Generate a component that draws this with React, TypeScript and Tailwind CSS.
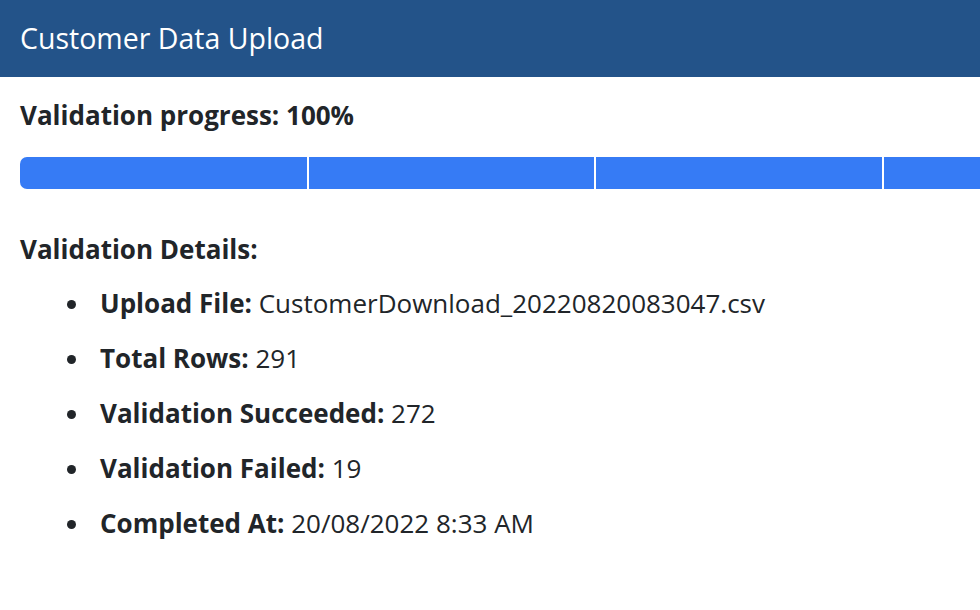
import React from "react"

const items = [
  { label: "Upload File:", value: "CustomerDownload_20220820083047.csv" },
  { label: "Total Rows:", value: "291" },
  { label: "Validation Succeeded:", value: "272" },
  { label: "Validation Failed:", value: "19" },
  { label: "Completed At:", value: "20/08/2022 8:33 AM" },
]

export default function App() {
  return (
    <div
      className="h-[610px] w-[980px] overflow-hidden bg-white text-[#212529]"
      style={{ fontFamily: '"Open Sans", "Noto Sans", sans-serif' }}
    >
      <header className="flex h-[77px] items-center bg-[#235389] px-5">
        <h1 className="text-[28.5px] font-normal leading-none text-white">Customer Data Upload</h1>
      </header>

      <div className="pl-5">
        <div className="mt-[23px] text-[26px] font-bold leading-[30px]">
          Validation progress: 100%
        </div>

        <div className="mt-[27px] flex h-[32px] w-[1200px] gap-[2px] overflow-hidden rounded-l-[7px]">
          <div className="w-[287px] shrink-0 bg-[#367bf5]" />
          <div className="w-[285px] shrink-0 bg-[#367bf5]" />
          <div className="w-[286px] shrink-0 bg-[#367bf5]" />
          <div className="w-[286px] shrink-0 bg-[#367bf5]" />
        </div>

        <div className="mt-[45px] text-[26px] font-bold leading-[30px]">
          Validation Details:
        </div>

        <ul className="mt-[12px] list-disc pl-[72px] text-[26px] leading-[55px]">
          {items.map((it) => (
            <li key={it.label} className="pl-[8px]">
              <span className="font-bold">{it.label}</span> {it.value}
            </li>
          ))}
        </ul>
      </div>
    </div>
  )
}
